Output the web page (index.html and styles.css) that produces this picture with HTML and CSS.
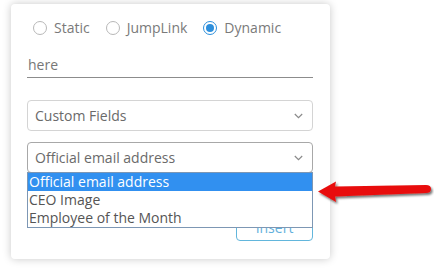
FILE: index.html
```html
<!DOCTYPE html>
<html>
<head>
<meta charset="utf-8">
<link rel="stylesheet" href="styles.css">
</head>
<body>
<div class="card">
  <div class="radios">
    <label class="radio"><span class="dot"></span><span>Static</span></label>
    <label class="radio"><span class="dot"></span><span>JumpLink</span></label>
    <label class="radio"><span class="dot on"></span><span>Dynamic</span></label>
  </div>
  <div class="input">here</div>
  <div class="select s1"><span>Custom Fields</span>
    <svg class="chev" width="9" height="6" viewBox="0 0 9 6"><path d="M0.8 1 L4.5 4.6 L8.2 1" fill="none" stroke="#8a8a8a" stroke-width="1.2"/></svg>
  </div>
  <div class="select s2"><span>Official email address</span>
    <svg class="chev" width="9" height="6" viewBox="0 0 9 6"><path d="M0.8 1 L4.5 4.6 L8.2 1" fill="none" stroke="#8a8a8a" stroke-width="1.2"/></svg>
  </div>
  <div class="actions"><div class="btn">Insert</div></div>
  <ul class="list">
    <li class="sel">Official email address</li>
    <li>CEO Image</li>
    <li>Employee of the Month</li>
  </ul>
</div>
<svg class="arrow" width="118" height="34" viewBox="0 0 118 34">
  <defs>
    <filter id="sh" x="-10%" y="-30%" width="130%" height="170%">
      <feDropShadow dx="1.5" dy="2" stdDeviation="1.2" flood-color="#000" flood-opacity="0.55"/>
    </filter>
  </defs>
  <path d="M2 13.5 L20 3.5 L19 8.5 L110 7 Q115 7 115 11 Q115 15 110 15 L19 18.5 L20 24 Z" fill="#e8100c" filter="url(#sh)"/>
</svg>
</body>
</html>
```
FILE: styles.css
```css
html, body {
  margin: 0;
  padding: 0;
  background: #fff;
}
body {
  font-family: "Open Sans", "Liberation Sans", sans-serif;
  font-size: 14px;
  color: #6f6f6f;
  width: 434px;
  height: 268px;
  overflow: hidden;
  position: relative;
}
.card {
  position: relative;
  margin: 4px 0 0 11px;
  width: 319px;
  height: 255px;
  box-sizing: border-box;
  padding: 16px 17px 0 16px;
  background: #fff;
  border-radius: 4px;
  box-shadow: 0 0 9px rgba(0, 0, 0, 0.22);
}
.radios {
  display: flex;
  align-items: center;
  height: 16px;
  padding-left: 6px;
  gap: 16px;
}
.radio {
  display: flex;
  align-items: center;
  gap: 7px;
  line-height: 16px;
  color: #7a7a7a;
}
.dot {
  width: 12px;
  height: 12px;
  border: 1px solid #b8b8b8;
  border-radius: 50%;
  box-sizing: content-box;
  position: relative;
}
.dot.on {
  border-color: #2d8fdc;
}
.dot.on::after {
  content: "";
  position: absolute;
  left: 2px;
  top: 2px;
  width: 8px;
  height: 8px;
  border-radius: 50%;
  background: #2d8fdc;
}
.input {
  margin-top: 19px;
  height: 22px;
  line-height: 20px;
  padding-left: 1px;
  border-bottom: 1px solid #8c8c8c;
  color: #777;
}
.select {
  display: flex;
  align-items: center;
  justify-content: space-between;
  height: 31px;
  box-sizing: border-box;
  border: 1px solid #d4d4d4;
  border-radius: 4px;
  padding: 0 9px 0 7px;
  color: #6a6a6a;
}
.s1 {
  margin-top: 22px;
}
.s2 {
  margin-top: 11px;
  border-color: #a8a8a8;
}
.actions {
  display: flex;
  justify-content: flex-end;
  margin-top: 38px;
}
.btn {
  width: 77px;
  height: 30px;
  box-sizing: border-box;
  border: 1px solid #62b6dc;
  border-radius: 4px;
  color: #62b0dc;
  display: flex;
  align-items: center;
  justify-content: center;
  padding-top: 2px;
}
.list {
  position: absolute;
  left: 16px;
  top: 168px;
  width: 286px;
  margin: 0;
  padding: 0;
  list-style: none;
  box-sizing: border-box;
  border: 1px solid #7d97b4;
  background: #fff;
  color: #555;
}
.list li {
  height: 18px;
  line-height: 18px;
  padding-left: 1px;
  white-space: nowrap;
}
.list li.sel {
  background: #3190f0;
  color: #fff;
}
.arrow {
  position: absolute;
  left: 316px;
  top: 178px;
}
```
